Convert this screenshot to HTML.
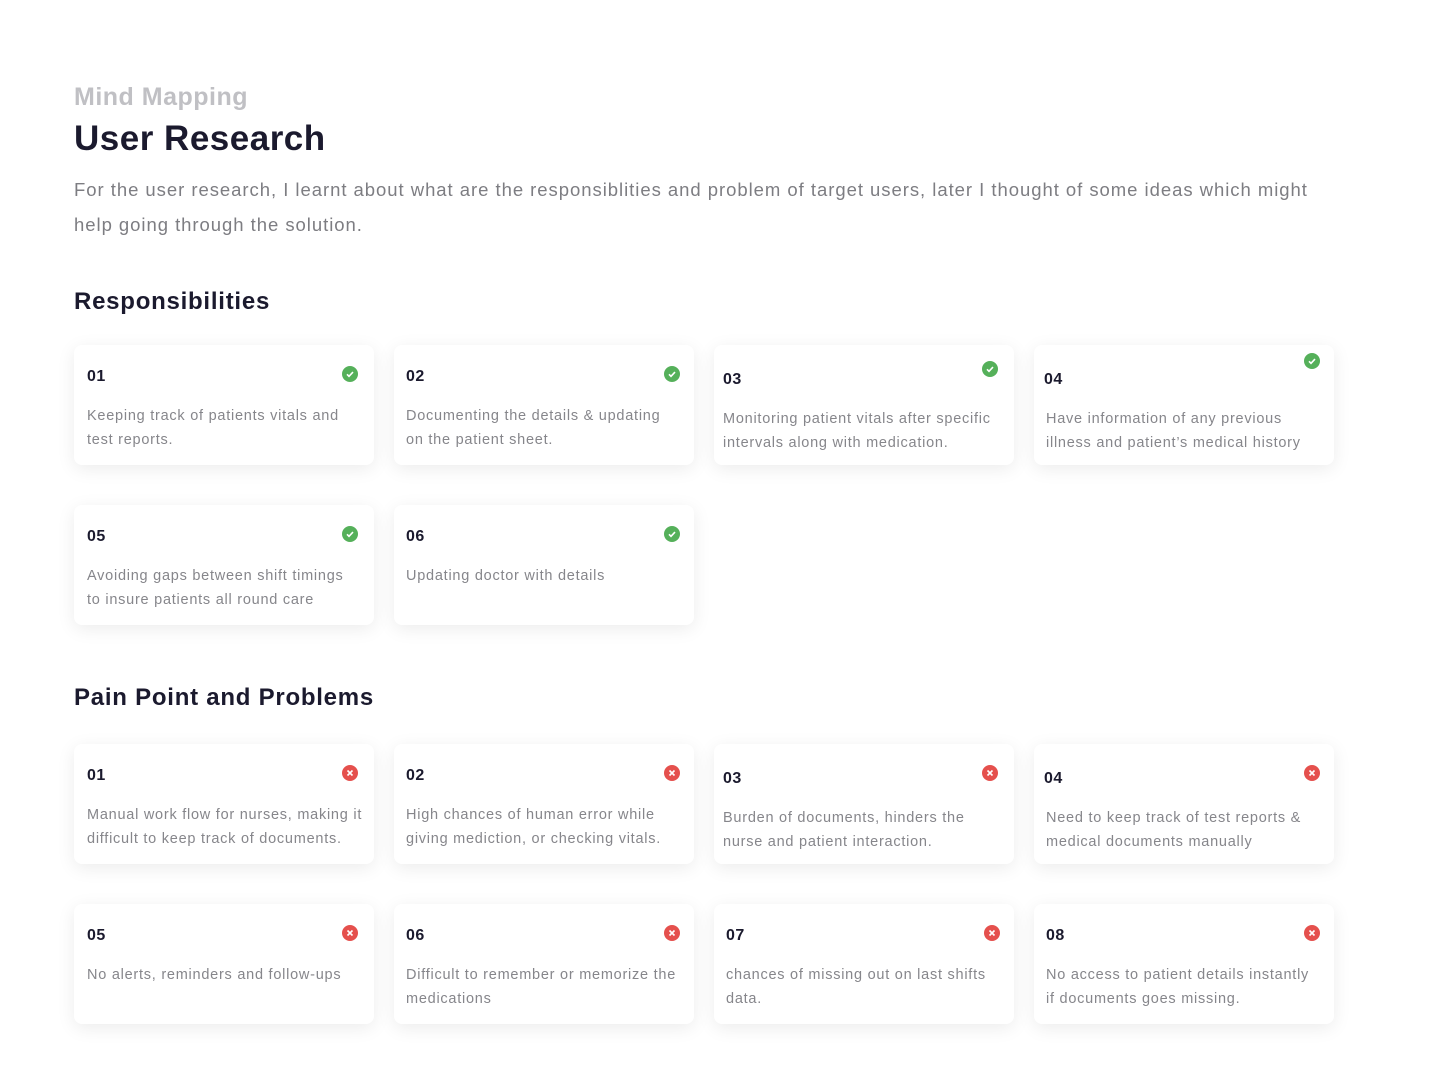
<!DOCTYPE html>
<html><head><meta charset="utf-8"><style>
*{margin:0;padding:0;box-sizing:border-box}
body{width:1440px;height:1083px;background:#fff;font-family:"Liberation Sans",sans-serif;position:relative;overflow:hidden}
.a{position:absolute;white-space:nowrap}
.sub{left:74px;top:83px;font-size:25px;font-weight:bold;color:#c0c0c4;letter-spacing:.5px}
.h1{left:74px;top:119px;font-size:35px;font-weight:bold;color:#1b1a2e;letter-spacing:.5px}
.p{left:74px;top:172px;font-size:18.5px;line-height:35px;color:#7d7d82;letter-spacing:.96px}
.h2{left:74px;font-size:24px;font-weight:bold;color:#1b1a2e;letter-spacing:.75px}
.card{position:absolute;width:300px;height:120px;background:#fff;border-radius:8px;box-shadow:0 4px 18px rgba(0,0,0,.08)}
.n{position:absolute;left:13px;font-size:16px;font-weight:bold;color:#1b1a2e;letter-spacing:.5px}
.d{position:absolute;left:13px;font-size:14.5px;line-height:24px;color:#86868b;letter-spacing:.75px;white-space:nowrap}
.i{position:absolute;width:16px;height:16px;border-radius:50%;right:16px}
.i svg{display:block}
.ok{background:#55b05a}.no{background:#e5504d}
</style></head><body>
<div class="a sub">Mind Mapping</div>
<div class="a h1">User Research</div>
<div class="a p">For the user research, I learnt about what are the responsiblities and problem of target users, later I thought of some ideas which might<br>help going through the solution.</div>
<div class="a h2" style="top:288px">Responsibilities</div>
<div class="a h2" style="top:684px">Pain Point and Problems</div>

<div class="card" style="left:74px;top:345px"><div class="n" style="top:23px">01</div><i class="i ok" style="top:21px"><svg width="16" height="16"><path d="M5 8.3l2 2 4-4.2" stroke="#fff" stroke-width="1.6" fill="none"/></svg></i><div class="d" style="top:59px">Keeping track of patients vitals and<br>test reports.</div></div>
<div class="card" style="left:394px;top:345px"><div class="n" style="left:12px;top:23px">02</div><i class="i ok" style="top:21px;right:14px"><svg width="16" height="16"><path d="M5 8.3l2 2 4-4.2" stroke="#fff" stroke-width="1.6" fill="none"/></svg></i><div class="d" style="left:12px;top:59px">Documenting the details &amp; updating<br>on the patient sheet.</div></div>
<div class="card" style="left:714px;top:345px"><div class="n" style="left:9px;top:26px">03</div><i class="i ok" style="top:16px"><svg width="16" height="16"><path d="M5 8.3l2 2 4-4.2" stroke="#fff" stroke-width="1.6" fill="none"/></svg></i><div class="d" style="left:9px;top:62px">Monitoring patient vitals after specific<br>intervals along with medication.</div></div>
<div class="card" style="left:1034px;top:345px"><div class="n" style="left:10px;top:26px">04</div><i class="i ok" style="top:8px;right:14px"><svg width="16" height="16"><path d="M5 8.3l2 2 4-4.2" stroke="#fff" stroke-width="1.6" fill="none"/></svg></i><div class="d" style="left:12px;top:62px">Have information of any previous<br>illness and patient’s medical history</div></div>

<div class="card" style="left:74px;top:505px"><div class="n" style="top:23px">05</div><i class="i ok" style="top:21px"><svg width="16" height="16"><path d="M5 8.3l2 2 4-4.2" stroke="#fff" stroke-width="1.6" fill="none"/></svg></i><div class="d" style="top:59px">Avoiding gaps between shift timings<br>to insure patients all round care</div></div>
<div class="card" style="left:394px;top:505px"><div class="n" style="left:12px;top:23px">06</div><i class="i ok" style="top:21px;right:14px"><svg width="16" height="16"><path d="M5 8.3l2 2 4-4.2" stroke="#fff" stroke-width="1.6" fill="none"/></svg></i><div class="d" style="left:12px;top:59px">Updating doctor with details</div></div>

<div class="card" style="left:74px;top:744px"><div class="n" style="top:23px">01</div><i class="i no" style="top:21px"><svg width="16" height="16"><path d="M5.5 5.5l5 5M10.5 5.5l-5 5" stroke="#fff" stroke-width="1.6"/></svg></i><div class="d" style="top:59px">Manual work flow for nurses, making it<br>difficult to keep track of documents.</div></div>
<div class="card" style="left:394px;top:744px"><div class="n" style="left:12px;top:23px">02</div><i class="i no" style="top:21px;right:14px"><svg width="16" height="16"><path d="M5.5 5.5l5 5M10.5 5.5l-5 5" stroke="#fff" stroke-width="1.6"/></svg></i><div class="d" style="left:12px;top:59px">High chances of human error while<br>giving mediction, or checking vitals.</div></div>
<div class="card" style="left:714px;top:744px"><div class="n" style="left:9px;top:26px">03</div><i class="i no" style="top:21px"><svg width="16" height="16"><path d="M5.5 5.5l5 5M10.5 5.5l-5 5" stroke="#fff" stroke-width="1.6"/></svg></i><div class="d" style="left:9px;top:62px">Burden of documents, hinders the<br>nurse and patient interaction.</div></div>
<div class="card" style="left:1034px;top:744px"><div class="n" style="left:10px;top:26px">04</div><i class="i no" style="top:21px;right:14px"><svg width="16" height="16"><path d="M5.5 5.5l5 5M10.5 5.5l-5 5" stroke="#fff" stroke-width="1.6"/></svg></i><div class="d" style="left:12px;top:62px">Need to keep track of test reports &amp;<br>medical documents manually</div></div>

<div class="card" style="left:74px;top:904px"><div class="n" style="top:23px">05</div><i class="i no" style="top:21px"><svg width="16" height="16"><path d="M5.5 5.5l5 5M10.5 5.5l-5 5" stroke="#fff" stroke-width="1.6"/></svg></i><div class="d" style="top:59px">No alerts, reminders and follow-ups</div></div>
<div class="card" style="left:394px;top:904px"><div class="n" style="left:12px;top:23px">06</div><i class="i no" style="top:21px;right:14px"><svg width="16" height="16"><path d="M5.5 5.5l5 5M10.5 5.5l-5 5" stroke="#fff" stroke-width="1.6"/></svg></i><div class="d" style="left:12px;top:59px">Difficult to remember or memorize the<br>medications</div></div>
<div class="card" style="left:714px;top:904px"><div class="n" style="left:12px;top:23px">07</div><i class="i no" style="top:21px;right:14px"><svg width="16" height="16"><path d="M5.5 5.5l5 5M10.5 5.5l-5 5" stroke="#fff" stroke-width="1.6"/></svg></i><div class="d" style="left:12px;top:59px">chances of missing out on last shifts<br>data.</div></div>
<div class="card" style="left:1034px;top:904px"><div class="n" style="left:12px;top:23px">08</div><i class="i no" style="top:21px;right:14px"><svg width="16" height="16"><path d="M5.5 5.5l5 5M10.5 5.5l-5 5" stroke="#fff" stroke-width="1.6"/></svg></i><div class="d" style="left:12px;top:59px">No access to patient details instantly<br>if documents goes missing.</div></div>
</body></html>
